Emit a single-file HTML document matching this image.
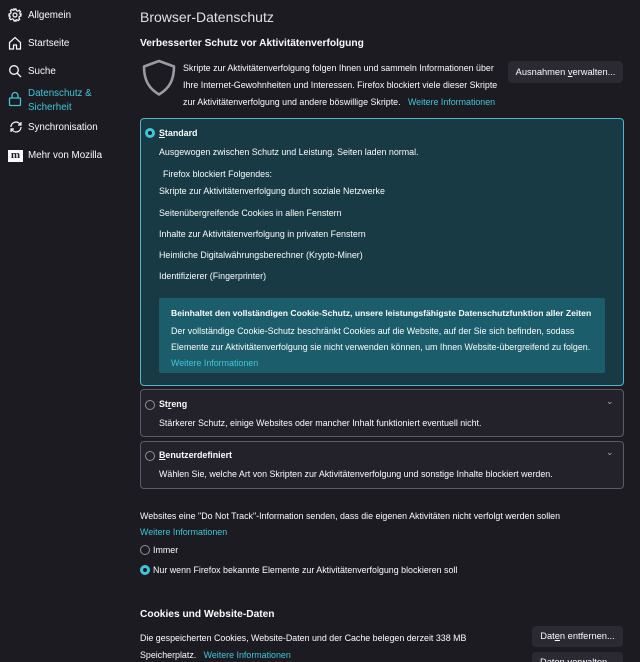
<!DOCTYPE html>
<html><head><meta charset="utf-8"><style>
*{margin:0;padding:0;box-sizing:border-box}
html,body{width:640px;height:662px;overflow:hidden}
body{background:#1c1b22;color:#fbfbfe;font-family:"Liberation Sans",sans-serif;font-size:8.9px;position:relative}
.a{position:absolute;white-space:nowrap}
.nav{font-size:9.8px;color:#fbfbfe}
.l{color:#3fc6d8}
.b{font-weight:bold}
.btn{position:absolute;background:#2b2a33;border-radius:4px;font-size:9.3px;text-align:center;color:#fbfbfe}
.box{position:absolute;border:1px solid #5b5b66;border-radius:4px;background:#23222b}
.rad{position:absolute;width:10px;height:10px;border-radius:50%;border:1px solid #8f8f9d}
.radon{position:absolute;width:10px;height:10px;border-radius:50%;border:3px solid #3fc6d8;background:#1c1b22}
</style></head><body>
<svg class="a" style="left:8px;top:8px" width="14" height="14" viewBox="0 0 14 14" fill="none" stroke="#fbfbfe" stroke-width="1.2"><circle cx="7" cy="7" r="2"/><path d="M6 1h2l.4 1.6 1.4.6 1.4-.9 1.4 1.4-.9 1.4.6 1.4L13 6v2l-1.6.4-.6 1.4.9 1.4-1.4 1.4-1.4-.9-1.4.6L8 13H6l-.4-1.6-1.4-.6-1.4.9-1.4-1.4.9-1.4-.6-1.4L1 8V6l1.6-.4.6-1.4-.9-1.4 1.4-1.4 1.4.9 1.4-.6z"/></svg>
<div class="a nav" style="left:28px;top:10px">Allgemein</div>
<svg class="a" style="left:8px;top:36px" width="14" height="14" viewBox="0 0 14 14" fill="none" stroke="#fbfbfe" stroke-width="1.2"><path d="M1.5 6.5L7 1.5l5.5 5V13h-4V9h-3v4h-4z"/></svg>
<div class="a nav" style="left:28px;top:38px">Startseite</div>
<svg class="a" style="left:8px;top:64px" width="14" height="14" viewBox="0 0 14 14" fill="none" stroke="#fbfbfe" stroke-width="1.3"><circle cx="6" cy="6" r="4.3"/><path d="M9.2 9.2L13 13"/></svg>
<div class="a nav" style="left:28px;top:66px">Suche</div>
<svg class="a" style="left:8px;top:91px" width="14" height="16" viewBox="0 0 14 16" fill="none" stroke="#3fc6d8" stroke-width="1.3"><rect x="1.5" y="7" width="11" height="7.5" rx="1"/><path d="M4 7V4.5a3 3 0 0 1 6 0V7"/></svg>
<div class="a nav l" style="left:28px;top:87px;line-height:13.5px">Datenschutz &amp;<br>Sicherheit</div>
<svg class="a" style="left:9px;top:120px" width="14" height="14" viewBox="0 0 14 14" fill="none" stroke="#fbfbfe" stroke-width="1.2"><path d="M2 7a5 5 0 0 1 8.5-3.5L12 5M12 7a5 5 0 0 1-8.5 3.5L2 9"/><path d="M12 2v3H9M2 12V9h3"/></svg>
<div class="a nav" style="left:28px;top:122px">Synchronisation</div>
<div class="a" style="left:8px;top:150px;width:15px;height:12px;background:#fbfbfe;color:#1c1b22;font-weight:bold;font-size:11px;line-height:11px;text-align:center;font-family:'Liberation Serif',serif">m</div>
<div class="a nav" style="left:28px;top:150px">Mehr von Mozilla</div>

<div class="a" style="left:140px;top:9px;font-size:14px;color:#e0e0e6">Browser-Datenschutz</div>
<div class="a b" style="left:140px;top:38px;font-size:10.2px">Verbesserter Schutz vor Aktivitätenverfolgung</div>
<svg class="a" style="left:140px;top:58px" width="38" height="40" viewBox="0 0 38 40" fill="none" stroke="#9a9aa2" stroke-width="2.6"><path d="M19 3L34 8.5c0 14-5 22-15 28C9 30.5 4 22.5 4 8.5z" stroke-linejoin="round"/></svg>
<div class="a" style="left:183px;top:60px;line-height:17px">Skripte zur Aktivitätenverfolgung folgen Ihnen und sammeln Informationen über<br>Ihre Internet-Gewohnheiten und Interessen. Firefox blockiert viele dieser Skripte<br>zur Aktivitätenverfolgung und andere böswillige Skripte. &nbsp; <span class="l">Weitere Informationen</span></div>
<div class="btn" style="left:508px;top:61px;width:115px;height:22px;line-height:22px">Ausnahmen <u>v</u>erwalten...</div>

<div class="a" style="left:140px;top:118px;width:484px;height:268px;border:1px solid #4fb7c9;border-radius:4px;background:#173a44"></div>
<div class="radon" style="left:145px;top:128px"></div>
<div class="a b" style="left:159px;top:128px"><u>S</u>tandard</div>
<div class="a" style="left:159px;top:147px">Ausgewogen zwischen Schutz und Leistung. Seiten laden normal.</div>
<div class="a" style="left:163px;top:169px">Firefox blockiert Folgendes:</div>
<div class="a" style="left:159px;top:186px">Skripte zur Aktivitätenverfolgung durch soziale Netzwerke</div>
<div class="a" style="left:159px;top:208px">Seitenübergreifende Cookies in allen Fenstern</div>
<div class="a" style="left:159px;top:229px">Inhalte zur Aktivitätenverfolgung in privaten Fenstern</div>
<div class="a" style="left:159px;top:250px">Heimliche Digitalwährungsberechner (Krypto-Miner)</div>
<div class="a" style="left:159px;top:271px">Identifizierer (Fingerprinter)</div>
<div class="a" style="left:159px;top:298px;width:446px;height:75px;background:#1c5d6b;border-radius:2px"></div>
<div class="a b" style="left:171px;top:308px;font-size:8.6px">Beinhaltet den vollständigen Cookie-Schutz, unsere leistungsfähigste Datenschutzfunktion aller Zeiten</div>
<div class="a" style="left:171px;top:323px;line-height:16px">Der vollständige Cookie-Schutz beschränkt Cookies auf die Website, auf der Sie sich befinden, sodass<br>Elemente zur Aktivitätenverfolgung sie nicht verwenden können, um Ihnen Website-übergreifend zu folgen.<br><span class="l">Weitere Informationen</span></div>

<div class="box" style="left:140px;top:389px;width:484px;height:48px"></div>
<div class="rad" style="left:145px;top:400px"></div>
<div class="a b" style="left:159px;top:399px">St<u>r</u>eng</div>
<div class="a" style="left:606px;top:396px;font-size:9px;color:#aaa">⌄</div>
<div class="a" style="left:159px;top:418px">Stärkerer Schutz, einige Websites oder mancher Inhalt funktioniert eventuell nicht.</div>

<div class="box" style="left:140px;top:441px;width:484px;height:48px"></div>
<div class="rad" style="left:145px;top:451px"></div>
<div class="a b" style="left:159px;top:450px"><u>B</u>enutzerdefiniert</div>
<div class="a" style="left:606px;top:447px;font-size:9px;color:#aaa">⌄</div>
<div class="a" style="left:159px;top:469px">Wählen Sie, welche Art von Skripten zur Aktivitätenverfolgung und sonstige Inhalte blockiert werden.</div>

<div class="a" style="left:140px;top:511px">Websites eine "Do Not Track"-Information senden, dass die eigenen Aktivitäten nicht verfolgt werden sollen</div>
<div class="a l" style="left:140px;top:527px">Weitere Informationen</div>
<div class="rad" style="left:140px;top:545px"></div>
<div class="a" style="left:153px;top:545px">Immer</div>
<div class="radon" style="left:140px;top:565px"></div>
<div class="a" style="left:153px;top:565px">Nur wenn Firefox bekannte Elemente zur Aktivitätenverfolgung blockieren soll</div>

<div class="a b" style="left:140px;top:609px;font-size:10.2px">Cookies und Website-Daten</div>
<div class="a" style="left:140px;top:630px;line-height:17px">Die gespeicherten Cookies, Website-Daten und der Cache belegen derzeit 338 MB<br>Speicherplatz. &nbsp; <span class="l">Weitere Informationen</span></div>
<div class="btn" style="left:532px;top:626px;width:91px;height:21px;line-height:21px">Dat<u>e</u>n entfernen...</div>
<div class="btn" style="left:532px;top:652px;width:91px;height:21px;line-height:21px">Daten verwalten...</div>
</body></html>
